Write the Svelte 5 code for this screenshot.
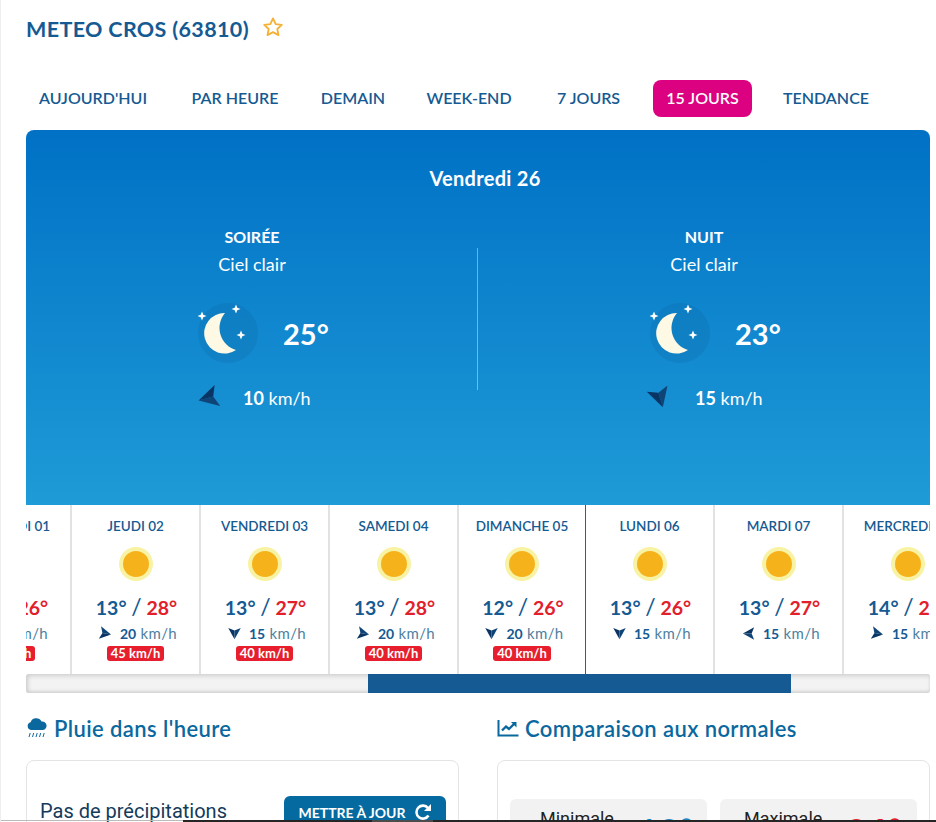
<script>
  const tabs = ["AUJOURD'HUI", 'PAR HEURE', 'DEMAIN', 'WEEK-END', '7 JOURS', '15 JOURS', 'TENDANCE'];
  const parts = [
    { name: 'SOIRÉE', temp: 25, angle: -105, wind: 10 },
    { name: 'NUIT', temp: 23, angle: 163, wind: 15 }
  ];
  const days = [
    { label: 'MERCREDI 01', min: 13, max: 26, angle: 100, wind: 20, gust: 40 },
    { label: 'JEUDI 02', min: 13, max: 28, angle: 100, wind: 20, gust: 45 },
    { label: 'VENDREDI 03', min: 13, max: 27, angle: 180, wind: 15, gust: 40 },
    { label: 'SAMEDI 04', min: 13, max: 28, angle: 100, wind: 20, gust: 40 },
    { label: 'DIMANCHE 05', min: 12, max: 26, angle: 180, wind: 20, gust: 40, last: true },
    { label: 'LUNDI 06', min: 13, max: 26, angle: 180, wind: 15 },
    { label: 'MARDI 07', min: 13, max: 27, angle: -90, wind: 15 },
    { label: 'MERCREDI 08', min: 14, max: 26, angle: 100, wind: 15 }
  ];
  const sparkles = [[4, 13], [38, 6], [43, 32]];
</script>

{#snippet arrow(angle, size)}
  <svg class="arrow" width={size} height={size} viewBox="0 0 24 24" style="transform: rotate({angle}deg)">
    <path d="M12 3 L2 21 L12 17Z" fill="#0f4476" />
    <path d="M12 3 L22 21 L12 17Z" fill="#0a3463" />
  </svg>
{/snippet}

<div class="page">
  <header>
    <h1>METEO CROS (63810)</h1>
    <svg class="star" width="22" height="22" viewBox="0 0 24 24">
      <path d="M12 2.600 L14.900 8.800 L21.600 9.600 L16.700 14.200 L18 20.900 L12 17.600 L6 20.900 L7.300 14.200 L2.400 9.600 L9.100 8.800Z" fill="none" stroke="#f4b136" stroke-width="2" stroke-linejoin="round" />
    </svg>
  </header>

  <nav>
    {#each tabs as t}
      <a class:active={t === '15 JOURS'} href="#top">{t}</a>
    {/each}
  </nav>

  <section class="panel">
    <h2>Vendredi 26</h2>
    <div class="parts">
      {#each parts as p, i}
        <div class="part" class:first={i === 0}>
          <div class="name">{p.name}</div>
          <div class="sky">Ciel clair</div>
          <div class="now">
            <svg width="60" height="60" viewBox="0 0 60 60">
              <circle cx="30" cy="30" r="30" fill="#0d659f" opacity="0.22" />
              <path d="M27 10 A20.300 20.300 0 1 0 38 47 A23 23 0 0 1 27 10Z" fill="#fdf9e4" />
              {#each sparkles as [x, y]}
                <path d="M0 -4.500 L1.300 -1.300 L4.500 0 L1.300 1.300 L0 4.500 L-1.300 1.300 L-4.500 0 L-1.300 -1.300Z" transform="translate({x} {y})" fill="#fff" />
              {/each}
            </svg>
            <span class="temp">{p.temp}°</span>
          </div>
          <div class="wind">
            {@render arrow(p.angle, 26)}
            <span><b>{p.wind}</b> km/h</span>
          </div>
        </div>
      {/each}
    </div>
  </section>

  <div class="strip">
    <div class="track">
      {#each days as d}
        <div class="day" class:last={d.last}>
          <div class="label">{d.label}</div>
          <svg class="sun" width="34" height="34" viewBox="0 0 34 34">
            <circle cx="17" cy="17" r="17" fill="#f8f3a4" />
            <circle cx="17" cy="17" r="13" fill="#f6b21b" />
          </svg>
          <div class="temps">{d.min}° <i>/</i> <em>{d.max}°</em></div>
          <div class="dwind">
            {@render arrow(d.angle, 15)}
            <span><b>{d.wind}</b> km/h</span>
          </div>
          {#if d.gust}<div class="gust">{d.gust} km/h</div>{/if}
        </div>
      {/each}
    </div>
  </div>
  <div class="scrollbar"><div class="thumb"></div></div>

  <div class="cols">
    <section class="col">
      <h3>
        <svg width="22" height="22" viewBox="0 0 22 22">
          <path d="M5 13 A4 4 0 0 1 4.600 5.200 A6 6 0 0 1 15.500 4.500 A4.300 4.300 0 0 1 17 13Z" fill="#0a689e" />
          <path d="M3 20 L4.200 16 M6.500 20 L7.700 16 M10 20 L11.200 16 M13.500 20 L14.700 16 M17 20 L18.200 16" stroke="#0a689e" stroke-width="1" fill="none" />
        </svg>
        Pluie dans l'heure
      </h3>
      <div class="card rain">
        <p>Pas de précipitations</p>
        <button>
          METTRE À JOUR
          <svg width="18" height="18" viewBox="0 0 18 18">
            <path d="M14 5 A6.500 6.500 0 1 0 14.500 12.500" fill="none" stroke="#fff" stroke-width="2.600" />
            <path d="M17 1 V8 H10Z" fill="#fff" />
          </svg>
        </button>
      </div>
    </section>
    <section class="col">
      <h3>
        <svg width="22" height="22" viewBox="0 0 22 22">
          <path d="M1.500 3 V18.500 H21.500" fill="none" stroke="#0a689e" stroke-width="2" />
          <path d="M5 13.500 L9 9.500 L12 12 L17 7" fill="none" stroke="#0a689e" stroke-width="2.400" />
          <path d="M14 5 H19.500 V10.500Z" fill="#0a689e" />
        </svg>
        Comparaison aux normales
      </h3>
      <div class="card normals">
        <div class="norm"><span>Minimale</span><strong class="cold">13°</strong></div>
        <div class="norm"><span>Maximale</span><strong class="hot">26°</strong></div>
      </div>
    </section>
  </div>

  <div class="edge"></div>
  <div class="taskbar"><span class="seg"></span></div>
</div>

<style>
  :global(body) { background: #fff; }
  .page {
    position: relative;
    box-sizing: border-box;
    width: 936px;
    height: 822px;
    overflow: hidden;
    padding: 0 6px 0 25px;
    border-left: 1px solid #eee;
    font-family: Lato, sans-serif;
    color: #155a92;
  }
  header { display: flex; align-items: center; gap: 13px; height: 58px; }
  h1 { margin: 0; font-size: 21.500px; font-weight: 700; letter-spacing: 0.35px; color: #155a92; }
  .star { margin-top: -4px; }

  nav { display: grid; grid-template-columns: 132px 112px 84px 108px 91px 99px 108px; column-gap: 20px; height: 37px; margin: 22px 0 13px; }
  nav a {
    display: flex;
    align-items: center;
    justify-content: center;
    padding: 0 0 2px 2px;
    border-radius: 8px;
    font-size: 16px;
    font-weight: 600;
    white-space: nowrap;
    color: #155a92;
    text-decoration: none;
  }
  nav a:last-child { padding-left: 0; }
  nav a.active { background: #dc0180; color: #fff; padding-left: 0; }

  .panel {
    height: 375px;
    box-sizing: border-box;
    padding-top: 36px;
    border-radius: 8px 8px 0 0;
    background: linear-gradient(180deg, #0071c5, #1f9bd7);
    color: #fff;
  }
  h2 { margin: 0 0 0 14px; height: 24px; line-height: 24px; font-size: 20px; font-weight: 700; letter-spacing: 0.3px; text-align: center; }
  .parts { display: flex; margin-top: 37px; }
  .part { position: relative; width: 452px; }
  .part.first::after {
    content: '';
    position: absolute;
    right: 0;
    top: 21px;
    height: 142px;
    border-right: 1px solid rgba(255, 255, 255, 0.4);
  }
  .name, .sky { text-align: center; }
  .name { font-size: 16px; font-weight: 700; line-height: 20px; }
  .sky { font-size: 18px; line-height: 24px; margin-top: 5px; }
  .now { display: flex; align-items: center; gap: 25px; height: 60px; margin: 27px 0 0 172px; }
  .temp { font-size: 29px; font-weight: 700; }
  .wind { display: flex; align-items: center; gap: 22px; height: 26px; margin: 22px 0 0 169px; font-size: 18px; }
  .wind b { font-weight: 700; }
  .arrow { flex: none; }

  .strip { height: 169px; overflow: hidden; }
  .track { display: flex; margin-left: -83px; height: 100%; }
  .day {
    flex: none;
    width: 129px;
    box-sizing: border-box;
    border-right: 2px solid #e2e2e2;
    display: flex;
    flex-direction: column;
    align-items: center;
    padding-top: 12px;
  }
  .day.last { width: 127px; border-right: 1px solid #0e6ba8; }
  .label { font-size: 13.500px; font-weight: 600; line-height: 18px; white-space: nowrap; }
  .sun { margin-top: 12px; }
  .temps { font-size: 19.500px; font-weight: 700; line-height: 24px; margin: 15px 0 0 2px; white-space: nowrap; }
  .temps i { font-style: normal; font-weight: 400; font-size: 23px; line-height: 20px; }
  .temps em { font-style: normal; color: #e2202c; }
  .dwind { display: flex; align-items: center; gap: 7px; height: 18px; margin: 4px 0 0 4px; font-size: 15px; letter-spacing: 0.4px; white-space: nowrap; color: #4e7fa0; }
  .dwind b { color: #155a92; font-size: 14px; letter-spacing: 0; }
  .gust {
    margin-top: 4px;
    padding: 0 4px;
    height: 15px;
    line-height: 15px;
    border-radius: 3px;
    background: #e61e2d;
    color: #fff;
    font-size: 13px;
    font-weight: 700;
    white-space: nowrap;
  }
  .scrollbar {
    height: 19px;
    border-radius: 3px;
    background: #f3f3f3;
    box-shadow: inset 2px 2px 4px #cfcfcf, inset 0 -2px 3px #d4d4d4;
  }
  .thumb { width: 423px; height: 100%; margin-left: 342px; background: #155a92; }

  .cols { display: flex; gap: 38px; margin-top: 22px; }
  .col { width: 433px; }
  h3 {
    display: flex;
    align-items: center;
    gap: 6px;
    margin: 0;
    height: 26px;
    font-size: 22px;
    font-weight: 600;
    letter-spacing: 0.4px;
    color: #0a689e;
    white-space: nowrap;
  }
  .card {
    box-sizing: border-box;
    height: 120px;
    margin-top: 19px;
    border: 1px solid #e4e4e4;
    border-radius: 8px;
  }
  .rain { display: flex; align-items: flex-start; justify-content: space-between; padding: 35px 12px 0 13px; }
  .rain p { margin: 0; padding-top: 3px; font: 400 20px/24px Roboto, sans-serif; color: #143b5a; }
  button {
    display: flex;
    align-items: center;
    justify-content: center;
    gap: 8px;
    width: 162px;
    height: 32px;
    border: 0;
    border-radius: 6px;
    background: #046a9f;
    color: #fff;
    font: 700 14px Lato, sans-serif;
  }
  .normals { display: flex; gap: 13px; padding: 38px 12px 0; }
  .norm {
    display: flex;
    gap: 24px;
    width: 197px;
    height: 60px;
    box-sizing: border-box;
    padding: 9px 0 0 30px;
    border-radius: 6px;
    background: #f2f2f2;
    font: 400 18px/22px Roboto, sans-serif;
    color: #222;
  }
  .norm + .norm { padding-left: 24px; }
  .norm strong { font: 700 34px/34px Lato, sans-serif; padding-top: 6px; letter-spacing: 1px; }
  .cold { color: #2087c6; }
  .hot { color: #e2202c; }

  /* bande sombre tout en bas, par-dessus la page */
  .edge { position: absolute; left: 0; bottom: 1px; width: 182px; height: 1px; background: #bbb; }
  .taskbar {
    position: absolute;
    left: 182px;
    right: 0;
    bottom: 0;
    height: 2px;
    background: #252525;
  }
  .seg { position: absolute; left: 189px; width: 61px; height: 100%; background: #4c4c4c; }
</style>
